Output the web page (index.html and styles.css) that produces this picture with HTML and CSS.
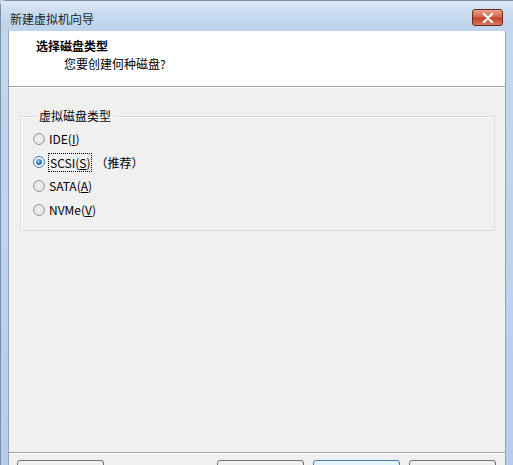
FILE: index.html
```html
<!DOCTYPE html>
<html lang="zh-CN">
<head>
    <meta charset="UTF-8">
    <title>新建虚拟机向导</title>
    <link rel="stylesheet" href="styles.css">
</head>
<body>

    <div class="window">
        <!-- Title bar -->
        <div class="titlebar">
            <span class="title">新建虚拟机向导</span>
            <div class="close-btn">
                <svg width="14" height="10" viewBox="0 0 14 10">
                    <path d="M3 1 L11 9 M11 1 L3 9" stroke="#fff" stroke-width="2.4" stroke-linecap="round"/>
                </svg>
            </div>
        </div>

        <div class="client">
            <!-- Header -->
            <div class="header">
                <h1>选择磁盘类型</h1>
                <p>您要创建何种磁盘?</p>
            </div>

            <!-- Body -->
            <div class="content">
                <fieldset class="group">
                    <legend>虚拟磁盘类型</legend>
                    <label class="option"><span class="radio"></span>IDE(<u>I</u>)</label>
                    <label class="option"><span class="radio checked"></span><span class="focus">SCSI(<u>S</u>)</span><span class="hint">（推荐）</span></label>
                    <label class="option"><span class="radio"></span>SATA(<u>A</u>)</label>
                    <label class="option"><span class="radio"></span>NVMe(<u>V</u>)</label>
                </fieldset>
            </div>

            <!-- Footer -->
            <div class="footer">
                <div class="btn"></div>
                <div class="spacer"></div>
                <div class="btn"></div>
                <div class="btn primary"></div>
                <div class="btn"></div>
            </div>
        </div>
    </div>

</body>
</html>
```

FILE: styles.css
```css
/* General Reset */
* {
    margin: 0;
    padding: 0;
    box-sizing: border-box;
}

body {
    font-family: "Noto Sans CJK SC", "DejaVu Sans", sans-serif;
    font-size: 12px;
    color: #000;
    background-color: #b9d1ea;
    width: 513px;
    height: 465px;
    overflow: hidden;
}

/* Window frame */
.window {
    height: 465px;
    display: flex;
    flex-direction: column;
    background: linear-gradient(to bottom, #c4d8ee 0%, #bcd3ec 60%, #b6cde8 100%);
    border-left: 1px solid #7a8ea6;
    border-top: 1px solid #7a8ea6;
    border-top-left-radius: 6px;
}

.titlebar {
    height: 30px;
    display: flex;
    align-items: center;
    justify-content: space-between;
    padding: 0 10px 0 9px;
    background: linear-gradient(to bottom, #dae7f5 0%, #c6daef 50%, #bcd3eb 100%);
}

.title {
    font-size: 12px;
    color: #1e1e1e;
    margin-top: 4px;
}

.close-btn {
    width: 31px;
    height: 17px;
    margin-top: 3px;
    display: flex;
    align-items: center;
    justify-content: center;
    border: 1px solid #6d2a22;
    border-radius: 3px;
    background: linear-gradient(to bottom, #e8a493 0%, #d7624b 45%, #c2402a 55%, #d67b5e 100%);
}

.client {
    flex: 1;
    display: flex;
    flex-direction: column;
    margin: 0 7px 0 7px;
    border-left: 1px solid #8ea4bd;
    border-right: 1px solid #8ea4bd;
    background-color: #f0f0f0;
}

/* Header */
.header {
    height: 56px;
    background-color: #fff;
    border-bottom: 1px solid #a0a0a0;
    box-shadow: 0 1px 0 #fff;
    padding: 6px 0 0 27px;
}

.header h1 {
    font-size: 12px;
    font-weight: bold;
    line-height: 17px;
}

.header p {
    line-height: 17px;
    margin-left: 28px;
    margin-top: 1px;
}

/* Content */
.content {
    flex: 1;
    padding: 21px 10px 0 11px;
}

.group {
    border: 1px solid #d5dfe5;
    box-shadow: inset 1px 1px 0 #fff;
    height: 123px;
    padding: 3px 0 0 12px;
}

.group legend {
    padding: 0 2px;
    margin-left: 4px;
    line-height: 16px;
}

.option {
    display: flex;
    align-items: center;
    height: 23.6px;
    font-size: 12px;
    color: #000;
}

.option u {
    text-decoration: underline;
}

.radio {
    width: 12px;
    height: 12px;
    border-radius: 50%;
    border: 1px solid #9a9a9a;
    background: radial-gradient(circle at 50% 50%, #f4f4f4 0%, #dcdcdc 100%);
    margin-right: 4px;
    position: relative;
}

.radio.checked {
    border-color: #3c7fb1;
    background: #f4f4f4;
}

.radio.checked::after {
    content: "";
    position: absolute;
    left: 2px;
    top: 2px;
    width: 6px;
    height: 6px;
    border-radius: 50%;
    background: radial-gradient(circle at 40% 35%, #8ad1f5 0%, #1e6fb8 60%, #0d4b85 100%);
}

.focus {
    outline: 1px dotted #000;
    outline-offset: 0;
    padding: 0 1px;
}

.hint {
    margin-left: 4px;
}

/* Footer */
.footer {
    height: 13px;
    border-top: 1px solid #a0a0a0;
    box-shadow: inset 0 1px 0 #fff;
    display: flex;
    gap: 9px;
    padding: 7px 9px 0 8px;
    overflow: hidden;
}

.btn {
    width: 87px;
    height: 23px;
    border: 1px solid #707070;
    border-radius: 3px;
    background: linear-gradient(to bottom, #f2f2f2, #ebebeb 50%, #dddddd 50%, #cfcfcf);
}

.btn.primary {
    border-color: #3c7fb1;
    background: linear-gradient(to bottom, #eaf6fd, #d9f0fc 50%, #bee6fd 50%, #a7d9f5);
}

.spacer {
    flex: 1;
}
```
